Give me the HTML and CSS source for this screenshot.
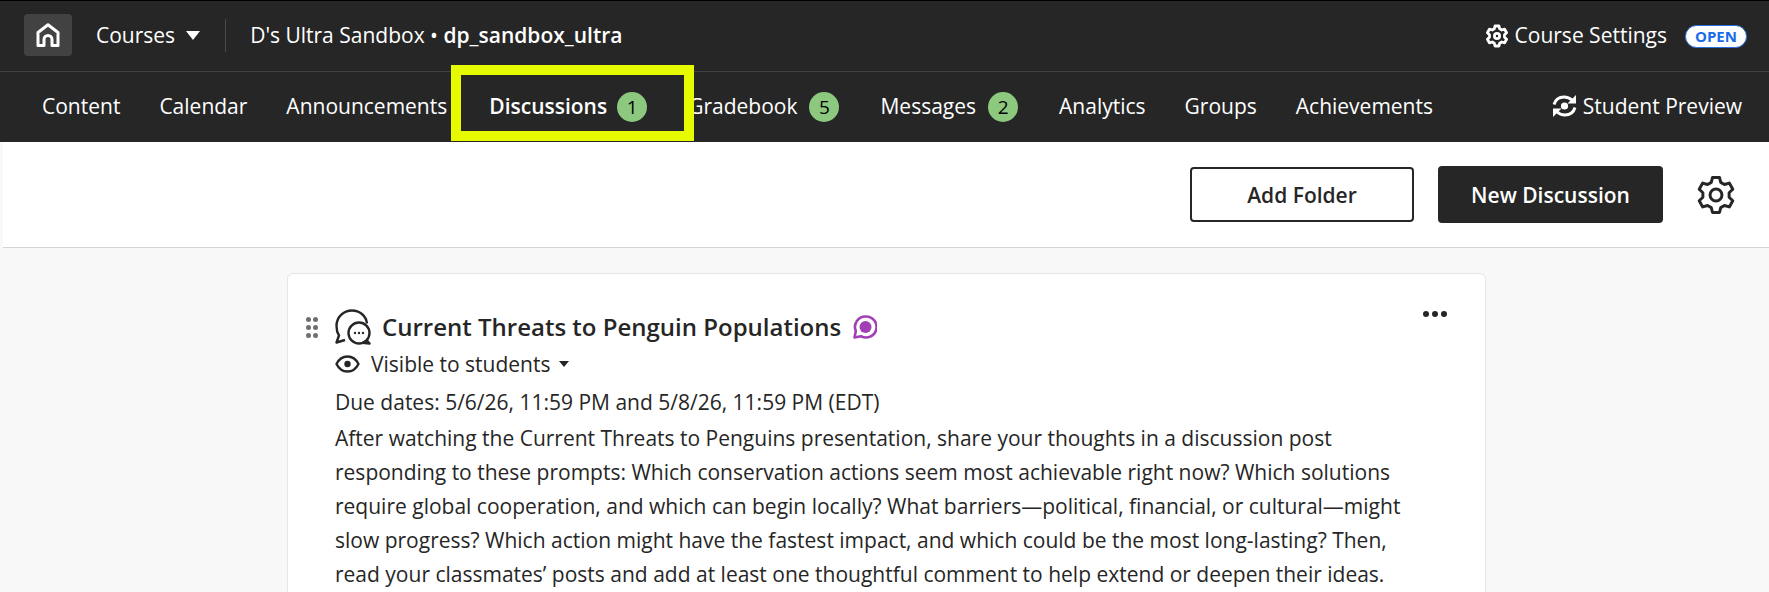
FILE: index.html
```html
<!DOCTYPE html>
<html lang="en">
<head>
    <meta charset="UTF-8">
    <link rel="stylesheet" href="styles.css">
    <title>Discussions</title>
</head>
<body>
    <header class="top-bar">
        <div class="home-btn">
            <svg width="24" height="24" viewBox="0 0 24 24" fill="none" stroke="#fff" stroke-width="3" stroke-linejoin="round"><path d="M2 22.500V9.500L12 1.800l10 7.700v13h-6v-6a4 4 0 0 0-8 0v6z"/></svg>
        </div>
        <div class="courses">Courses <span class="caret"></span></div>
        <div class="top-divider"></div>
        <div class="course-name">D's Ultra Sandbox • <b>dp_sandbox_ultra</b></div>
        <div class="top-right">
            <div class="settings">
                <svg width="24" height="24" viewBox="0 0 24 24" fill="none" stroke="#fff" stroke-width="2.800" stroke-linejoin="round"><path d="M10 2h4l.7 2.800 2.100 1.200 2.800-.8 2 3.500-2.100 2v2.600l2.100 2-2 3.500-2.800-.8-2.100 1.200L14 22h-4l-.7-2.800-2.100-1.200-2.800.8-2-3.500 2.100-2v-2.600l-2.100-2 2-3.500 2.800.8 2.100-1.200z"/><circle cx="12" cy="12" r="2.600"/></svg>
                Course Settings
            </div>
            <span class="open-pill">OPEN</span>
        </div>
    </header>

    <nav class="course-nav">
        <a href="#" class="nav-item">Content</a>
        <a href="#" class="nav-item">Calendar</a>
        <a href="#" class="nav-item">Announcements</a>
        <a href="#" class="nav-item has-count active">Discussions <span class="count">1</span></a>
        <a href="#" class="nav-item has-count">Gradebook <span class="count">5</span></a>
        <a href="#" class="nav-item has-count">Messages <span class="count">2</span></a>
        <a href="#" class="nav-item">Analytics</a>
        <a href="#" class="nav-item">Groups</a>
        <a href="#" class="nav-item">Achievements</a>
        <div class="preview">
            <svg width="25" height="22" viewBox="0 0 25 22" fill="none" stroke="#fff" stroke-width="3"><path d="M2 9.500C3.500 4.500 7.500 2 12 2c3.500 0 6 1.200 8.500 3.500"/><path d="M23 12.500C21.500 17.500 17.500 20 13 20c-3.500 0-6-1.200-8.500-3.500"/><path d="M24 0v8.500h-8.500z" fill="#fff" stroke="none"/><path d="M1 22v-8.500h8.500z" fill="#fff" stroke="none"/><circle cx="12.500" cy="11" r="3.600" fill="#fff" stroke="none"/></svg>
            Student Preview
        </div>
    </nav>
    <div class="highlight"></div>

    <section class="toolbar">
        <button class="btn btn-outline">Add Folder</button>
        <button class="btn btn-dark">New Discussion</button>
        <svg class="page-gear" width="42" height="42" viewBox="0 0 24 24" fill="none" stroke="#262626" stroke-width="1.700" stroke-linejoin="round"><path d="M10 2h4l.7 2.800 2.100 1.200 2.800-.8 2 3.500-2.100 2v2.600l2.100 2-2 3.500-2.800-.8-2.100 1.200L14 22h-4l-.7-2.800-2.100-1.200-2.800.8-2-3.500 2.100-2v-2.600l-2.100-2 2-3.500 2.800.8 2.100-1.200z"/><circle cx="12" cy="12" r="3.400"/></svg>
    </section>

    <main class="content">
        <article class="card">
            <div class="grip"><i></i><i></i><i></i><i></i><i></i><i></i></div>
            <div class="card-body">
                <div class="title-row">
                    <svg width="36" height="36" viewBox="0 0 36 36" fill="none" stroke="#262626" stroke-width="2.400" stroke-linejoin="round"><path d="M10 31l-8.500 2.500 2.500-7C2 23.500 1.500 20 1.500 17 1.500 8 8.500 1.500 17 1.500c7.500 0 14 5 15 13"/><circle cx="24" cy="24" r="10.500" fill="#fff"/><path d="M31.500 31l3 3.500-7-.8"/><circle cx="20" cy="24" r="1.200" fill="#262626" stroke="none"/><circle cx="24" cy="24" r="1.200" fill="#262626" stroke="none"/><circle cx="28" cy="24" r="1.200" fill="#262626" stroke="none"/></svg>
                    <h2>Current Threats to Penguin Populations</h2>
                    <svg class="badge" width="24" height="24" viewBox="0 0 24 24"><path d="M13 1.500a10.500 10.500 0 1 1-5 19.700L1.500 22.500l1.300-6.500A10.500 10.500 0 0 1 13 1.500z" fill="none" stroke="#a23fb4" stroke-width="2.600" stroke-linejoin="round"/><circle cx="12.500" cy="12" r="6" fill="#a23fb4"/></svg>
                </div>
                <div class="visibility">
                    <svg width="25" height="18" viewBox="0 0 25 18" fill="none" stroke="#262626" stroke-width="2.400"><path d="M1.500 9C4 4 8 1.500 12.500 1.500S21 4 23.500 9C21 14 17 16.500 12.500 16.500S4 14 1.500 9z" stroke-linejoin="round"/><circle cx="12.500" cy="9" r="3.200" fill="#262626" stroke="none"/></svg>
                    Visible to students <span class="caret-small"></span>
                </div>
                <p class="due">Due dates: 5/6/26, 11:59 PM and 5/8/26, 11:59 PM (EDT)</p>
                <p class="desc">After watching the Current Threats to Penguins presentation, share your thoughts in a discussion post responding to these prompts: Which conservation actions seem most achievable right now? Which solutions require global cooperation, and which can begin locally? What barriers—political, financial, or cultural—might slow progress? Which action might have the fastest impact, and which could be the most long-lasting? Then, read your classmates’ posts and add at least one thoughtful comment to help extend or deepen their ideas.</p>
            </div>
            <div class="more"><i></i><i></i><i></i></div>
        </article>
    </main>
</body>
</html>
```

FILE: styles.css
```css
* {
    box-sizing: border-box;
}

html, body {
    height: 592px;
    overflow: hidden;
}

body {
    margin: 0;
    position: relative;
    background: #f8f8f8;
    color: #262626;
    font-family: "Open Sans", sans-serif;
    font-size: 21px;
}

.top-bar {
    display: flex;
    align-items: center;
    height: 72px;
    padding: 0 22px 2px 24px;
    background: #262626;
    border-top: 1px solid #000;
    border-bottom: 1px solid #3f3f3f;
    color: #fff;
}

.home-btn {
    display: flex;
    align-items: center;
    justify-content: center;
    width: 48px;
    height: 42px;
    border-radius: 4px;
    background: #424242;
}

.courses {
    display: flex;
    align-items: center;
    margin-left: 24px;
}

.caret {
    width: 0;
    height: 0;
    margin-left: 11px;
    border-left: 7.500px solid transparent;
    border-right: 7.500px solid transparent;
    border-top: 9px solid #fff;
}

.top-divider {
    width: 1px;
    height: 33px;
    margin: 0 24px 0 25px;
    background: #4a4a4a;
}

.course-name b {
    font-weight: 600;
}

.top-right {
    display: flex;
    align-items: center;
    margin-left: auto;
}

.settings {
    display: flex;
    align-items: center;
    gap: 6px;
}

.settings svg {
    margin-top: 2px;
}

.open-pill {
    width: 62px;
    height: 23px;
    margin-top: 2px;
    margin-left: 18px;
    border: 1px solid #2a6fe0;
    border-radius: 12px;
    background: #fff;
    color: #1a6be8;
    font-size: 15px;
    font-weight: 700;
    line-height: 21px;
    text-align: center;
}

.course-nav {
    display: flex;
    align-items: center;
    height: 70px;
    padding: 0 27px 2px 42px;
    background: #262626;
    color: #fff;
}

.nav-item {
    display: flex;
    align-items: center;
    margin-right: 39px;
    color: #fff;
    text-decoration: none;
}

.nav-item.has-count {
    margin-right: 41px;
}

.nav-item.active {
    margin-left: 3px;
    font-weight: 600;
}

.count {
    width: 30px;
    height: 30px;
    margin-top: 2px;
    margin-left: 12px;
    border-radius: 50%;
    background: #8cc97e;
    color: #000;
    font-size: 19px;
    font-weight: 400;
    line-height: 30px;
    text-align: center;
}

.active .count {
    margin-left: 10px;
}

.preview {
    display: flex;
    align-items: center;
    gap: 6px;
    margin-left: auto;
}

.highlight {
    position: absolute;
    left: 451px;
    top: 65px;
    width: 243px;
    height: 76px;
    border: 10px solid #e6fa00;
}

.toolbar {
    display: flex;
    align-items: center;
    justify-content: flex-end;
    height: 106px;
    margin-left: 3px;
    padding: 0 32px 0 0;
    background: #fff;
    border-bottom: 1px solid #d4d4d4;
}

.btn {
    border-radius: 4px;
    font-family: inherit;
    font-size: 21px;
    font-weight: 600;
}

.btn-outline {
    width: 224px;
    height: 55px;
    border: 2px solid #262626;
    background: #fff;
    color: #262626;
}

.btn-dark {
    width: 225px;
    height: 57px;
    margin-left: 24px;
    border: 0;
    background: #262626;
    color: #fff;
}

.page-gear {
    margin-left: 32px;
}

.content {
    padding: 25px 283px 0 287px;
}

.card {
    display: flex;
    position: relative;
    height: 400px;
    padding: 33px 24px 0 18px;
    border: 1px solid #e5e5e5;
    border-radius: 6px;
    background: #fff;
}

.grip {
    display: grid;
    grid-template-columns: 5px 5px;
    gap: 3px 2px;
    align-content: start;
    margin-top: 10px;
    margin-right: 17px;
}

.grip i {
    width: 5px;
    height: 5px;
    border-radius: 50%;
    background: #6f6f6f;
}

.card-body {
    flex: 1;
}

.title-row {
    display: flex;
    align-items: center;
    gap: 11px;
    height: 40px;
}

.title-row h2 {
    margin: 0 0 2px;
    font-size: 24px;
    font-weight: 600;
}

.badge {
    margin-left: 1px;
}

.visibility {
    display: flex;
    align-items: center;
    gap: 11px;
    height: 34px;
}

.caret-small {
    width: 0;
    height: 0;
    margin-left: -2px;
    border-left: 5.500px solid transparent;
    border-right: 5.500px solid transparent;
    border-top: 6px solid #262626;
}

.due, .desc {
    margin: 0;
    line-height: 34px;
}

.due {
    margin-top: 4px;
}

.desc {
    max-width: 1075px;
    margin-top: 2px;
}

.more {
    display: flex;
    position: absolute;
    top: 37px;
    right: 38px;
    gap: 3px;
}

.more i {
    width: 6px;
    height: 6px;
    border-radius: 50%;
    background: #262626;
}
```
